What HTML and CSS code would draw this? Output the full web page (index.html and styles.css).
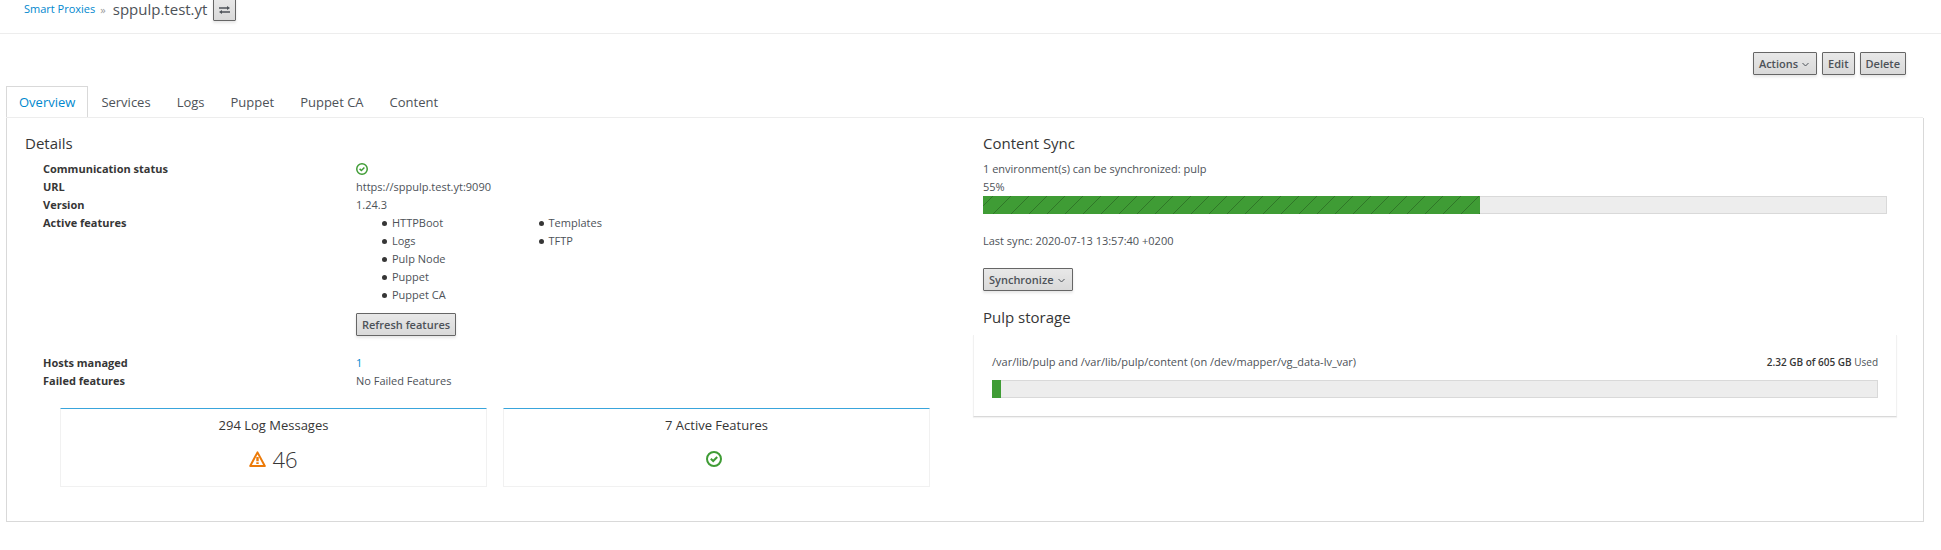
FILE: index.html
```html
<!DOCTYPE html>
<html lang="en">
<head>
    <meta charset="UTF-8">
    <meta name="viewport" content="width=device-width, initial-scale=1.0">
    <title>sppulp.test.yt</title>
    <link rel="stylesheet" href="styles.css">
</head>
<body>

    <!-- Breadcrumb -->
    <header class="breadcrumb">
        <a href="#">Smart Proxies</a>
        <span class="separator">»</span>
        <h1>sppulp.test.yt</h1>
        <button class="btn btn-switch" type="button" aria-label="Switch proxy">
            <svg width="11" height="8" viewBox="0 0 11 8" fill="#4d5258">
                <path d="M0 1.2h8V0l3 2-3 2V2.8H0z"/>
                <path d="M11 5.2H3V4L0 6l3 2V6.8h8z"/>
            </svg>
        </button>
    </header>

    <div class="toolbar">
        <button class="btn" type="button">Actions
            <svg class="caret" width="7" height="5" viewBox="0 0 7 5"><path d="M.5 1l3 3 3-3"/></svg>
        </button>
        <button class="btn" type="button">Edit</button>
        <button class="btn" type="button">Delete</button>
    </div>

    <nav class="tabs">
        <a class="active" href="#">Overview</a>
        <a href="#">Services</a>
        <a href="#">Logs</a>
        <a href="#">Puppet</a>
        <a href="#">Puppet CA</a>
        <a href="#">Content</a>
    </nav>

    <main class="panel">
        <section class="details">
            <h2>Details</h2>
            <dl>
                <dt>Communication status</dt>
                <dd>
                    <svg class="ok" width="12" height="12" viewBox="0 0 16 16" role="img" aria-label="OK">
                        <circle cx="8" cy="8" r="7"/>
                        <path d="M4.8 7.8 7.2 10l4-4"/>
                    </svg>
                </dd>
                <dt>URL</dt>
                <dd>https://sppulp.test.yt:9090</dd>
                <dt>Version</dt>
                <dd>1.24.3</dd>
                <dt>Active features</dt>
                <dd>
                    <div class="features">
                        <ul>
                            <li>HTTPBoot</li>
                            <li>Logs</li>
                            <li>Pulp Node</li>
                            <li>Puppet</li>
                            <li>Puppet CA</li>
                        </ul>
                        <ul>
                            <li>Templates</li>
                            <li>TFTP</li>
                        </ul>
                    </div>
                    <button class="btn btn-refresh" type="button">Refresh features</button>
                </dd>
                <dt>Hosts managed</dt>
                <dd><a href="#">1</a></dd>
                <dt>Failed features</dt>
                <dd>No Failed Features</dd>
            </dl>

            <div class="cards">
                <div class="card">
                    <h3>294 Log Messages</h3>
                    <p class="card-status">
                        <svg class="warning" width="17" height="16" viewBox="0 0 17 16" role="img" aria-label="Warning">
                            <path class="outline" d="M8.5 1.4 15.8 15H1.2z"/>
                            <path d="M7.3 6h2.4v4.2H7.3zM7.3 11.2h2.4v1.8H7.3z"/>
                        </svg>
                        <span>46</span>
                    </p>
                </div>
                <div class="card">
                    <h3>7 Active Features</h3>
                    <p class="card-status">
                        <svg class="ok" width="16" height="16" viewBox="0 0 16 16" role="img" aria-label="OK">
                            <circle cx="8" cy="8" r="7"/>
                            <path d="M4.8 7.8 7.2 10l4-4"/>
                        </svg>
                    </p>
                </div>
            </div>
        </section>

        <section class="sync">
            <h2>Content Sync</h2>
            <p>1 environment(s) can be synchronized: pulp</p>
            <p>55%</p>
            <div class="progress" role="progressbar" aria-label="Content sync" aria-valuenow="55">
                <div class="progress-bar striped" style="width: 55%"></div>
            </div>
            <p class="last-sync">Last sync: 2020-07-13 13:57:40 +0200</p>
            <button class="btn" type="button">Synchronize
                <svg class="caret" width="7" height="5" viewBox="0 0 7 5"><path d="M.5 1l3 3 3-3"/></svg>
            </button>

            <h2 class="storage-title">Pulp storage</h2>
            <div class="storage">
                <div class="storage-info">
                    <span>/var/lib/pulp and /var/lib/pulp/content (on /dev/mapper/vg_data-lv_var)</span>
                    <span class="usage"><strong>2.32 GB of 605 GB</strong> Used</span>
                </div>
                <div class="progress" role="progressbar" aria-label="Pulp storage" aria-valuenow="1">
                    <div class="progress-bar" style="width: 1%"></div>
                </div>
            </div>
        </section>
    </main>

</body>
</html>
```
FILE: styles.css
```css
* {
    box-sizing: border-box;
}

body {
    margin: 0;
    font-family: "Open Sans", "Noto Sans", sans-serif;
    font-size: 11px;
    line-height: 18px;
    color: #4d5258;
    background-color: #fff;
}

h1, h2, h3, p, dl, dd, ul {
    margin: 0;
    padding: 0;
    font-weight: 400;
}

a {
    color: #0088ce;
    text-decoration: none;
}

svg {
    flex: none;
}

/* Buttons */
.btn {
    display: inline-flex;
    align-items: center;
    height: 23px;
    padding: 0 5px;
    border: 1px solid #666;
    border-radius: 1px;
    font-family: inherit;
    font-size: 11px;
    font-weight: 600;
    color: #4d5258;
    background: linear-gradient(#e8e8e8, #d9d9d9);
    box-shadow: 0 2px 3px rgba(0, 0, 0, 0.1);
    cursor: pointer;
}

.caret {
    margin: 2px 2px 0 4px;
    fill: none;
    stroke: #4d5258;
}

/* Breadcrumb */
.breadcrumb {
    display: flex;
    align-items: center;
    margin-top: -2px;
    padding: 0 24px 12px;
    border-bottom: 1px solid #ededed;
}

.breadcrumb a,
.breadcrumb h1 {
    padding-bottom: 2px;
}

.breadcrumb .separator {
    margin: 0 7px 0 5px;
    color: #9c9c9c;
}

.breadcrumb h1 {
    font-size: 15px;
}

.btn-switch {
    margin-left: 6px;
}

/* Toolbar */
.toolbar {
    display: flex;
    justify-content: flex-end;
    gap: 5px;
    padding: 18px 35px 11px;
}

/* Tabs */
.tabs {
    display: flex;
    margin: 0 18px 0 6px;
    border-bottom: 1px solid #ededed;
}

.tabs a {
    padding: 6px 12px;
    border: 1px solid transparent;
    border-bottom: none;
    font-size: 13px;
    color: #4d5258;
}

.tabs a.active {
    color: #0088ce;
    border-color: #d9d9d9;
}

/* Panel */
.panel {
    display: grid;
    grid-template-columns: 1fr 1fr;
    margin: 0 17px 0 6px;
    padding: 15px 0 34px;
    border: 1px solid #d9d9d9;
    border-top: none;
}

.panel h2 {
    font-size: 15px;
    line-height: 20px;
    color: #363636;
}

.details {
    padding-left: 18px;
}

.details dl {
    display: grid;
    grid-template-columns: 1fr 2fr;
    margin: 7px -17px 18px 18px;
}

.details dt {
    font-weight: 700;
    color: #363636;
}

.details dd svg {
    display: block;
    margin-top: 3px;
}

.features {
    display: grid;
    grid-template-columns: repeat(4, 1fr);
}

.features ul {
    padding-left: 26px;
    list-style: none;
}

.features li {
    display: flex;
    align-items: center;
    gap: 5px;
}

.features li::before {
    content: "";
    width: 5px;
    height: 5px;
    border-radius: 50%;
    background-color: #363636;
}

.btn-refresh {
    margin: 9px 0 18px;
}

/* Icons */
.ok {
    fill: none;
    stroke: #3f9c35;
    stroke-width: 2;
}

.warning {
    fill: #ec7a08;
}

.warning .outline {
    fill: none;
    stroke: #ec7a08;
    stroke-width: 2;
    stroke-linejoin: round;
}

/* Summary cards */
.cards {
    display: grid;
    grid-template-columns: 1fr 1fr;
    gap: 16px;
    padding: 0 35px;
}

.card {
    height: 79px;
    border: 1px solid #f1f1f1;
    border-top: 1px solid #39a5dc;
    border-radius: 1px;
    text-align: center;
}

.card h3 {
    margin: 7px 0 12px;
    font-size: 13px;
    color: #363636;
}

.card-status {
    display: flex;
    justify-content: center;
    align-items: center;
    height: 26px;
    font-size: 22px;
    font-weight: 300;
    color: #363636;
}

.card-status svg {
    margin-right: 6px;
}

/* Content sync */
.sync {
    padding: 0 36px 0 18px;
}

.sync h2 {
    margin-bottom: 7px;
}

.progress {
    height: 18px;
    background-color: #ededed;
    box-shadow: inset 0 0 0 1px #d9d9d9;
}

.progress-bar {
    height: 100%;
    background-color: #3f9c35;
}

.striped {
    background-image: linear-gradient(135deg,
        transparent 25%, rgba(0, 0, 0, 0.24) 27%, rgba(0, 0, 0, 0.24) 28%, transparent 30%,
        transparent 75%, rgba(0, 0, 0, 0.24) 77%, rgba(0, 0, 0, 0.24) 78%, transparent 80%);
    background-size: 18px 18px;
}

.last-sync {
    margin: 18px 0;
}

.sync .storage-title {
    margin: 16px 0 8px;
}

.storage {
    margin: 0 -10px;
    padding: 18px;
    border: 1px solid #f1f1f1;
    border-top: none;
    border-bottom-color: #d9d9d9;
    box-shadow: 0 1px 1px rgba(0, 0, 0, 0.05);
}

.storage-info {
    display: flex;
    justify-content: space-between;
    margin-bottom: 9px;
}

.usage {
    font-size: 10px;
}

.usage strong {
    font-weight: 600;
    color: #363636;
}
```
